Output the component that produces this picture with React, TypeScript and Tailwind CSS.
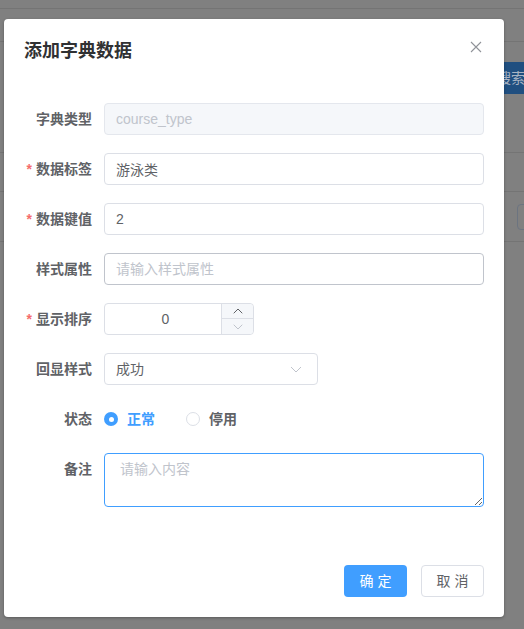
import React from 'react'

const font = { fontFamily: '"Liberation Sans", "Noto Sans CJK SC", sans-serif' }

function Label({ text, required }: { text: string; required?: boolean }) {
  return (
    <label className="w-[80px] shrink-0 pr-3 text-right text-sm leading-8 font-bold text-[#606266]">
      {required && <span className="mr-1 text-[#f56c6c]">*</span>}
      {text}
    </label>
  )
}

function Chevron({ up, color }: { up?: boolean; color: string }) {
  return (
    <svg width="12" height="12" viewBox="0 0 12 12" fill="none">
      <path
        d={up ? 'M2 8l4-4 4 4' : 'M2 4l4 4 4-4'}
        stroke={color}
        strokeWidth="1"
        strokeLinecap="round"
        strokeLinejoin="round"
      />
    </svg>
  )
}

export default function App() {
  return (
    <div className="relative h-[629px] w-[524px] overflow-hidden bg-[#808080]" style={font}>
      {/* dimmed page behind the dialog */}
      <div className="flex flex-col">
        <div className="h-[9px] border-b border-[#747474]"></div>
        <div className="h-[33px] border-b border-[#747474]"></div>
        <div className="flex h-[111px] items-start border-b border-[#747474] pt-5">
          <div className="ml-auto mr-[-21px] flex h-8 w-[68px] items-center justify-center rounded bg-[#204f80] text-sm text-[#a9b4c4]">
            搜索
          </div>
        </div>
        <div className="h-[39px] border-b border-[#747474]"></div>
        <div className="flex h-[50px] items-center border-b border-[#747474]">
          <div className="ml-auto mr-[-20px] h-[26px] w-[27px] rounded border border-[#6c7480]"></div>
        </div>
      </div>

      {/* dialog */}
      <div className="absolute left-[4px] top-[19px] w-[500px] rounded-sm bg-white shadow-[0_1px_3px_rgba(0,0,0,0.3)]">
        <div className="relative h-[54px] px-5 pt-5 pb-[10px] text-lg leading-6">
          <div className="h-6 font-bold text-[#303133]">添加字典数据</div>
          <button className="absolute right-5 top-5 flex h-4 w-4 items-center justify-center">
            <svg width="12" height="12" viewBox="0 0 12 12">
              <path d="M1 1l10 10M11 1L1 11" stroke="#909399" strokeWidth="1.1" />
            </svg>
          </button>
        </div>

        <div className="px-5 py-[30px]">
          <div className="mb-[18px] flex">
            <Label text="字典类型" />
            <input
              readOnly
              disabled
              value="course_type"
              className="h-8 flex-1 rounded border border-[#e4e7ed] bg-[#f5f7fa] px-[11px] text-sm text-[#c0c4cc] outline-none"
            />
          </div>
          <div className="mb-[18px] flex">
            <Label text="数据标签" required />
            <input
              readOnly
              value="游泳类"
              className="h-8 flex-1 rounded border border-[#dcdfe6] px-[11px] text-sm text-[#606266] outline-none"
            />
          </div>
          <div className="mb-[18px] flex">
            <Label text="数据键值" required />
            <input
              readOnly
              value="2"
              className="h-8 flex-1 rounded border border-[#dcdfe6] px-[11px] text-sm text-[#606266] outline-none"
            />
          </div>
          <div className="mb-[18px] flex">
            <Label text="样式属性" />
            <input
              readOnly
              placeholder="请输入样式属性"
              className="h-8 flex-1 rounded border border-[#c0c4cc] px-[11px] text-sm text-[#606266] outline-none placeholder:text-[#c0c4cc]"
            />
          </div>
          <div className="mb-[18px] flex">
            <Label text="显示排序" required />
            <div className="relative h-8 w-[150px]">
              <input
                readOnly
                value="0"
                className="h-8 w-full rounded border border-[#dcdfe6] pl-[15px] pr-[42px] text-center text-sm text-[#606266] outline-none"
              />
              <div className="absolute right-px top-px flex h-[30px] w-[32px] flex-col rounded-r border-l border-[#dcdfe6] bg-[#f5f7fa]">
                <span className="flex h-[15px] items-center justify-center border-b border-[#dcdfe6]">
                  <Chevron up color="#606266" />
                </span>
                <span className="flex flex-1 items-center justify-center">
                  <Chevron color="#c0c4cc" />
                </span>
              </div>
            </div>
          </div>
          <div className="mb-[18px] flex">
            <Label text="回显样式" />
            <div className="flex h-8 w-[214px] items-center rounded border border-[#dcdfe6] pl-[11px] pr-[14px] text-sm text-[#606266]">
              <span className="flex-1">成功</span>
              <svg width="14" height="14" viewBox="0 0 14 14" fill="none">
                <path d="M2 5l5 5 5-5" stroke="#c0c4cc" strokeWidth="1" strokeLinejoin="round" />
              </svg>
            </div>
          </div>
          <div className="mb-[18px] flex">
            <Label text="状态" />
            <div className="flex h-8 items-center text-sm font-bold">
              <span className="mr-[30px] flex items-center">
                <span className="flex h-[14px] w-[14px] items-center justify-center rounded-full bg-[#409eff]">
                  <span className="h-[5px] w-[5px] rounded-full bg-white"></span>
                </span>
                <span className="pl-[9px] text-[#409eff]">正常</span>
              </span>
              <span className="ml-px flex items-center">
                <span className="h-[14px] w-[14px] rounded-full border border-[#dcdfe6] bg-white"></span>
                <span className="pl-[9px] text-[#606266]">停用</span>
              </span>
            </div>
          </div>
          <div className="mb-[18px] flex">
            <Label text="备注" />
            <textarea
              readOnly
              placeholder="请输入内容"
              className="block h-[54px] flex-1 rounded border border-[#409eff] px-[15px] py-[5px] text-sm leading-[1.5] text-[#606266] outline-none placeholder:text-[#c0c4cc]"
            />
          </div>
        </div>

        <div className="flex justify-end gap-[14px] px-5 pt-[10px] pb-5">
          <button className="h-8 w-[63px] rounded bg-[#409eff] pl-[4px] text-sm tracking-[4px] text-white">
            确定
          </button>
          <button className="h-8 w-[63px] rounded border border-[#dcdfe6] bg-white pl-[4px] text-sm tracking-[4px] text-[#606266]">
            取消
          </button>
        </div>
      </div>
    </div>
  )
}
